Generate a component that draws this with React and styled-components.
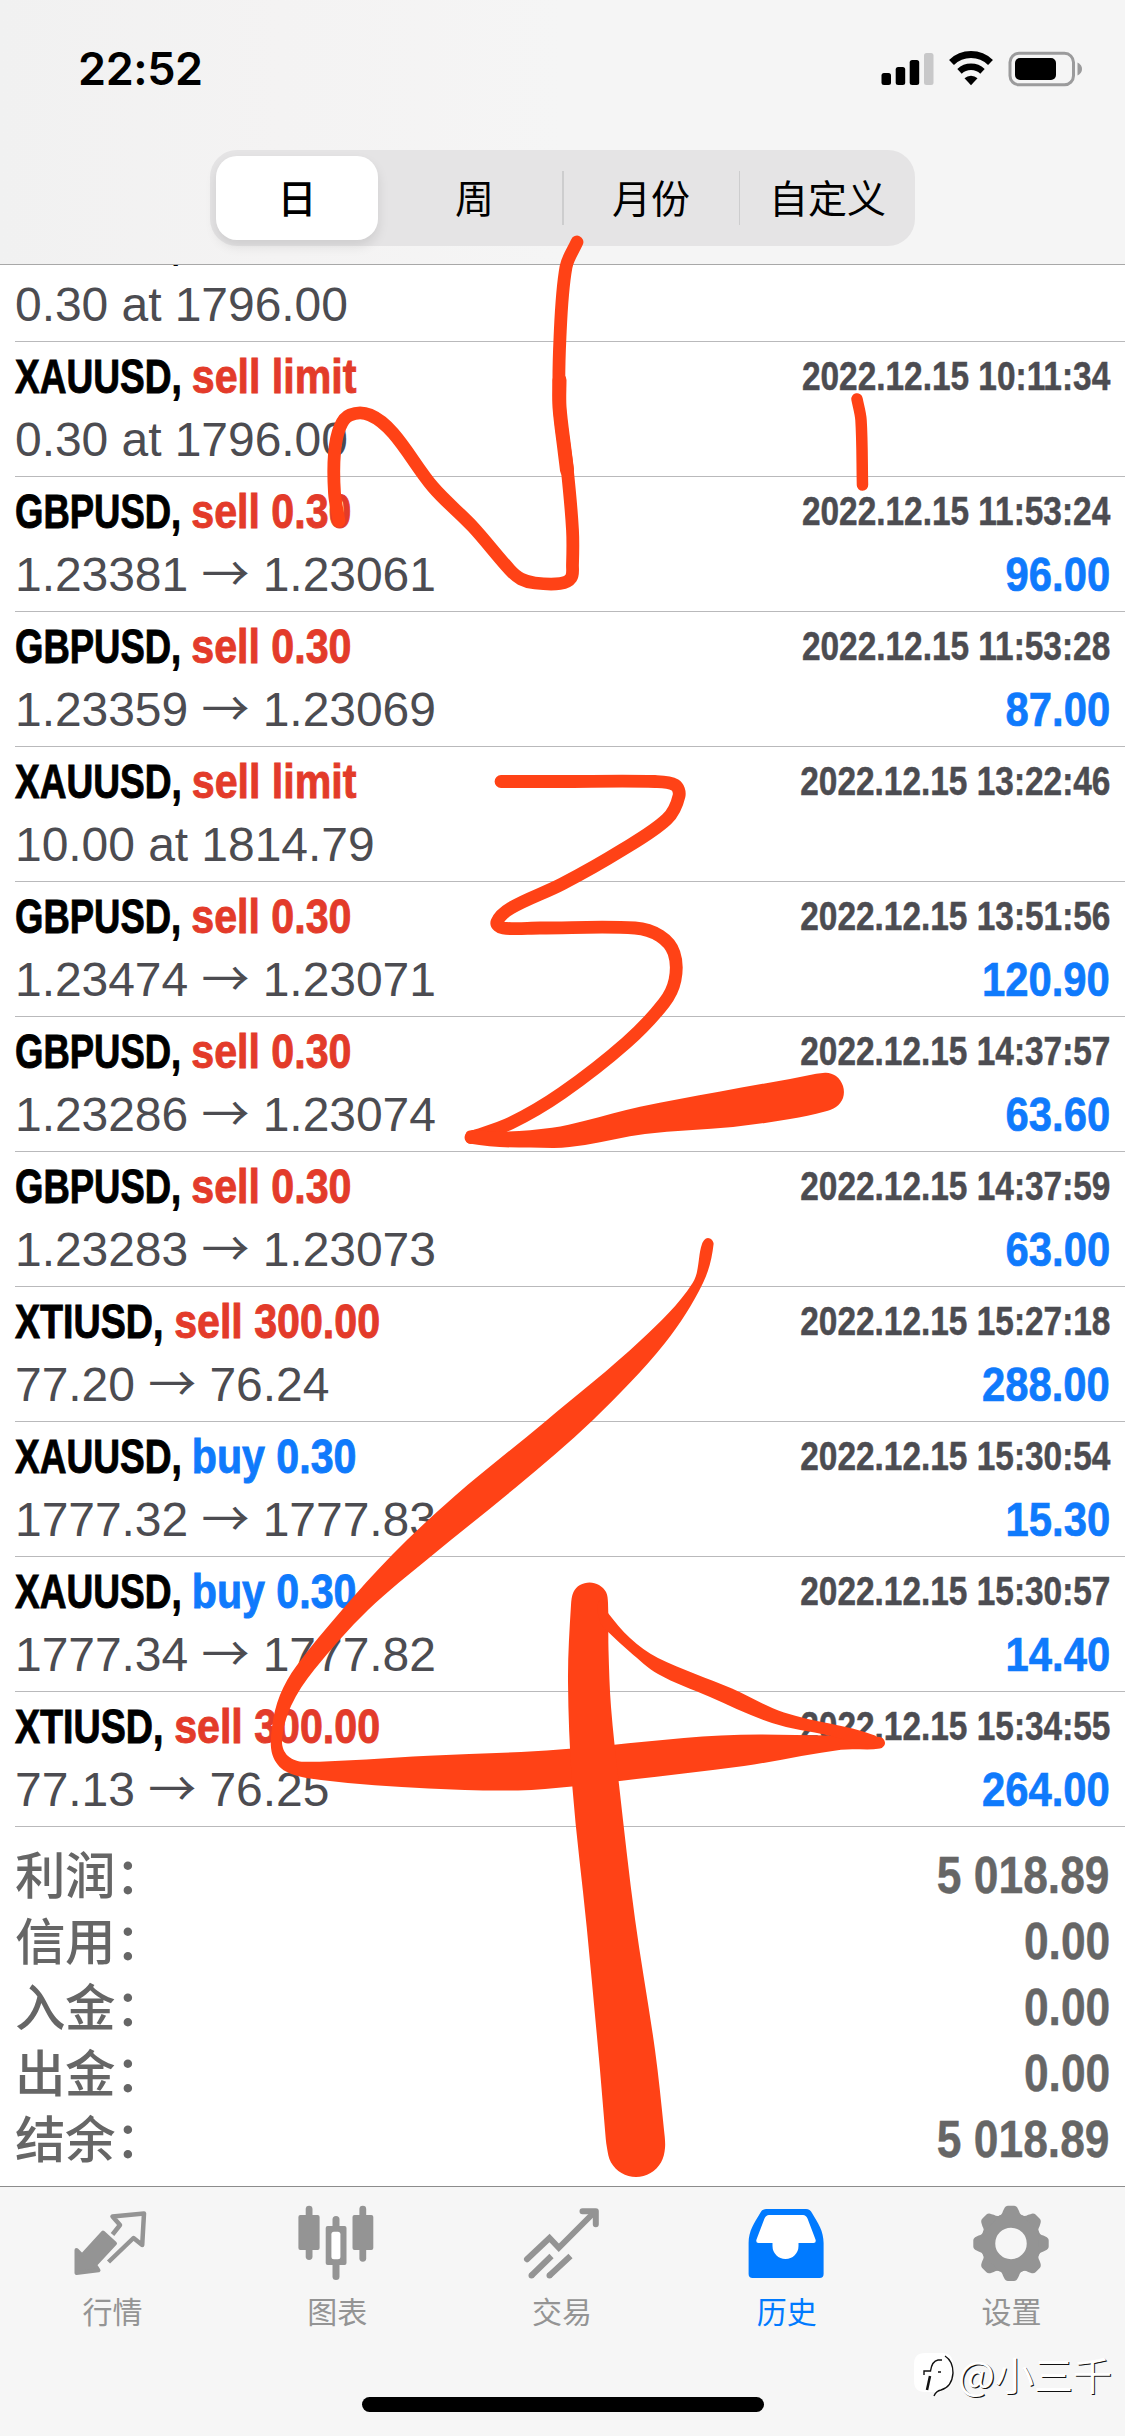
import React from 'react';
import styled, { createGlobalStyle } from 'styled-components';

const GlobalStyle = createGlobalStyle`
  * {
    box-sizing: border-box;
  }

  body {
    margin: 0;
    background: #fff;
    font-family: "Liberation Sans", "Noto Sans CJK SC", sans-serif;
  }
`;

const Screen = styled.div`
  position: relative;
  width: 1125px;
  height: 2436px;
  display: flex;
  flex-direction: column;
  background: #fff;
  overflow: hidden;
`;

const Header = styled.header`
  height: 265px;
  flex: none;
  background: linear-gradient(90deg, #f1f1f1 0%, #f4f3f3 25%, #f5f5f5 50%, #f5f5f5 100%);
  border-bottom: 1px solid #a8a8a8;
`;

const StatusBar = styled.div`
  height: 150px;
  padding: 42px 43px 0 78px;
  display: flex;
  justify-content: space-between;
  align-items: flex-start;
`;

const Clock = styled.div`
  font-family: Inter, sans-serif;
  font-size: 45px;
  font-weight: 600;
  line-height: 54px;
  letter-spacing: -0.4px;
  color: #000;
`;

const Segments = styled.div`
  width: 705px;
  height: 96px;
  margin: 0 auto;
  padding: 6px 0 6px 6px;
  display: flex;
  border-radius: 27px;
  background: #e5e4e5;
`;

const Segment = styled.button`
  flex: 0 0 ${(props) => (props.$active ? 162 : 175)}px;
  margin: ${(props) => (props.$active ? '0 9px 0 0' : '0')};
  padding: 0 0 4px;
  border: none;
  border-radius: 21px;
  background: ${(props) => (props.$active ? '#fff' : 'transparent')};
  box-shadow: ${(props) => (props.$active ? '0 6px 12px rgba(0, 0, 0, 0.1)' : 'none')};
  font-family: "Noto Sans CJK SC", sans-serif;
  font-size: 39px;
  font-weight: ${(props) => (props.$active ? 500 : 400)};
  color: #000;
`;

const Divider = styled.span`
  width: 2px;
  height: 54px;
  align-self: center;
  background: #cdcdce;
`;

const History = styled.main`
  flex: 1;
  min-height: 0;
  overflow: hidden;
`;

// the list is scrolled, so the first deal is half under the header
const DealList = styled.ul`
  list-style: none;
  margin: -58px 0 0;
  padding: 0 0 0 15px;
`;

const Deal = styled.li`
  height: 135px;
  padding: 0 15px 0 0;
  border-bottom: 1px solid #b9b9bb;
`;

const DealLine = styled.div`
  display: flex;
  justify-content: space-between;
  align-items: baseline;
  height: ${(props) => props.$height}px;
  line-height: 55px;
  padding-top: ${(props) => props.$top}px;
  white-space: nowrap;
`;

const Instrument = styled.span`
  font-size: 48px;
  font-weight: 700;
  color: #000;
  -webkit-text-stroke: 0.9px;
  transform: scaleX(${(props) => props.$squeeze});
  transform-origin: left;
`;

const Action = styled.span`
  display: inline-block;
  color: ${(props) => (props.$side === 'buy' ? '#0f7afc' : '#e33b2a')};
  transform: scaleX(${(props) => props.$stretch});
  transform-origin: left;
`;

const DealTime = styled.time`
  font-size: 40px;
  font-weight: 700;
  color: #4c4c51;
  -webkit-text-stroke: 0.5px;
  transform: translateY(-3px) scaleX(0.835);
  transform-origin: right;
`;

const Price = styled.span`
  font-size: 48px;
  letter-spacing: -0.05px;
  color: #4c4c51;
`;

const Arrow = styled.span`
  font-family: "Noto Sans CJK SC", sans-serif;
  font-weight: 400;
  line-height: 0;
`;

const Profit = styled.span`
  font-size: 48px;
  font-weight: 700;
  color: #0f7afc;
  -webkit-text-stroke: 0.7px;
  transform: scaleX(0.87);
  transform-origin: right;
`;

const Summary = styled.dl`
  margin: 0;
  padding: 14px 15px 0;
`;

const SummaryRow = styled.div`
  height: 66px;
  display: flex;
  justify-content: space-between;
  align-items: flex-start;
`;

const SummaryLabel = styled.dt`
  font-family: "Noto Sans CJK SC", sans-serif;
  font-size: 50.5px;
  font-weight: 500;
  line-height: 62px;
  letter-spacing: -0.4px;
  color: #666;
`;

const SummaryValue = styled.dd`
  margin: 0;
  font-size: 51px;
  font-weight: 700;
  line-height: 70px;
  color: #666;
  -webkit-text-stroke: 0.4px;
  transform: scaleX(0.87);
  transform-origin: right;
`;

const TabBar = styled.nav`
  height: 250px;
  flex: none;
  padding-right: 1px;
  display: flex;
  border-top: 1px solid #8c8c8c;
  background: #f6f6f6;
`;

const Tab = styled.a`
  flex: 1;
  padding-top: 13px;
  display: flex;
  flex-direction: column;
  align-items: center;
  color: ${(props) => (props.$active ? '#007aff' : '#949494')};
`;

const TabLabel = styled.span`
  font-family: "Noto Sans CJK SC", sans-serif;
  font-size: 30px;
  line-height: 40px;
`;

const HomeIndicator = styled.div`
  position: absolute;
  left: 362px;
  bottom: 24px;
  width: 402px;
  height: 15px;
  border-radius: 8px;
  background: #000;
`;

const Watermark = styled.div`
  position: absolute;
  left: 914px;
  bottom: 36px;
  display: flex;
  align-items: center;
  font-family: "Noto Sans CJK SC", sans-serif;
  font-size: 39px;
  line-height: 54px;
  white-space: nowrap;
  color: #fff;
  text-shadow: 1.2px 1.2px 0 #111;
`;

const Drawing = styled.svg`
  position: absolute;
  left: 0;
  top: 0;
  pointer-events: none;
`;

const deals = [
  { id: 1, symbol: 'XAUUSD', side: 'sell', label: 'sell limit', time: '2022.12.15 10:11:34', price: '0.30 at 1796.00' },
  { id: 2, symbol: 'XAUUSD', side: 'sell', label: 'sell limit', time: '2022.12.15 10:11:34', price: '0.30 at 1796.00' },
  { id: 3, symbol: 'GBPUSD', side: 'sell', label: 'sell 0.30', time: '2022.12.15 11:53:24', open: '1.23381', close: '1.23061', profit: '96.00' },
  { id: 4, symbol: 'GBPUSD', side: 'sell', label: 'sell 0.30', time: '2022.12.15 11:53:28', open: '1.23359', close: '1.23069', profit: '87.00' },
  { id: 5, symbol: 'XAUUSD', side: 'sell', label: 'sell limit', time: '2022.12.15 13:22:46', price: '10.00 at 1814.79' },
  { id: 6, symbol: 'GBPUSD', side: 'sell', label: 'sell 0.30', time: '2022.12.15 13:51:56', open: '1.23474', close: '1.23071', profit: '120.90' },
  { id: 7, symbol: 'GBPUSD', side: 'sell', label: 'sell 0.30', time: '2022.12.15 14:37:57', open: '1.23286', close: '1.23074', profit: '63.60' },
  { id: 8, symbol: 'GBPUSD', side: 'sell', label: 'sell 0.30', time: '2022.12.15 14:37:59', open: '1.23283', close: '1.23073', profit: '63.00' },
  { id: 9, symbol: 'XTIUSD', side: 'sell', label: 'sell 300.00', time: '2022.12.15 15:27:18', open: '77.20', close: '76.24', profit: '288.00' },
  { id: 10, symbol: 'XAUUSD', side: 'buy', label: 'buy 0.30', time: '2022.12.15 15:30:54', open: '1777.32', close: '1777.83', profit: '15.30' },
  { id: 11, symbol: 'XAUUSD', side: 'buy', label: 'buy 0.30', time: '2022.12.15 15:30:57', open: '1777.34', close: '1777.82', profit: '14.40' },
  { id: 12, symbol: 'XTIUSD', side: 'sell', label: 'sell 300.00', time: '2022.12.15 15:34:55', open: '77.13', close: '76.25', profit: '264.00' },
];

// how narrow each symbol is set
const squeeze = { XAUUSD: 0.772, GBPUSD: 0.76, XTIUSD: 0.784 };

const summary = [
  ['利润：', '5 018.89'],
  ['信用：', '0.00'],
  ['入金：', '0.00'],
  ['出金：', '0.00'],
  ['结余：', '5 018.89'],
];

const StatusIcons = () => (
  <svg width="204" height="54" viewBox="878 42 204 54">
    <rect x="881.5" y="73" width="9.5" height="12" rx="2.5" />
    <rect x="895.7" y="67" width="9.5" height="18" rx="2.5" />
    <rect x="909.7" y="60" width="9.5" height="25" rx="2.5" />
    <rect x="924" y="53" width="9.5" height="32" rx="2.5" fill="#c8c8c9" />
    <g fill="none" stroke="#000">
      <path d="M951.5 62.5a28 28 0 0 1 39 0" strokeWidth="7" />
      <path d="M959.5 71.3a17 17 0 0 1 23 0" strokeWidth="6.5" />
    </g>
    <path d="M964.5 78.3a9.5 9.5 0 0 1 13 0l-6.5 7z" />
    <rect x="1010" y="53.3" width="63.5" height="31.5" rx="9" fill="none" stroke="#9b9b9c" strokeWidth="3" />
    <rect x="1015" y="58" width="41" height="22" rx="5" />
    <path d="M1077.5 62.5c6 2.5 6 10.5 0 13z" fill="#9b9b9c" />
  </svg>
);

const QuotesIcon = () => (
  <svg width="90" height="90" viewBox="0 0 90 90" fill="none" stroke="currentColor" strokeWidth="4.5" strokeLinejoin="round">
    <path d="M45.5 34.5l7.5-9.5-7.5-8.5 31.5-3-1.8 31.5-8.7-7L41.5 62" />
    <path d="M9.5 50l5.5 5.5L36 32.5 48 43.5 28 64.8l3.5 5.5L9.5 73z" fill="currentColor" strokeWidth="4" />
  </svg>
);

const ChartIcon = () => (
  <svg width="90" height="90" viewBox="0 0 90 90" fill="currentColor">
    <rect x="6.4" y="15" width="21.2" height="35" rx="2" />
    <rect x="13.7" y="5.7" width="6.8" height="54.3" rx="3.4" />
    <rect x="40.5" y="16" width="7" height="64" rx="3.5" />
    <rect x="33.7" y="26" width="20.8" height="39" rx="2" />
    <rect x="39.4" y="31.7" width="9" height="27.6" rx="2.5" fill="#fff" />
    <rect x="60.5" y="15" width="20.8" height="35" rx="2" />
    <rect x="67.4" y="5.7" width="6.8" height="56" rx="3.4" />
  </svg>
);

const TradeIcon = () => (
  <svg width="90" height="90" viewBox="0 0 90 90" fill="none" stroke="currentColor" strokeWidth="6">
    <path d="M10 59.3L32.5 38l9.3 9.8L77 12.5" strokeLinecap="round" />
    <path d="M65.5 11.2h13.3v13" strokeLinecap="round" strokeLinejoin="round" />
    <path d="M14.5 75.5L34.5 56M32.5 75.5L53.5 56" />
    <circle cx="14.5" cy="75.5" r="3" fill="currentColor" stroke="none" />
    <circle cx="32.5" cy="75.5" r="3" fill="currentColor" stroke="none" />
  </svg>
);

const HistoryIcon = () => (
  <svg width="90" height="90" viewBox="0 0 90 90">
    <path
      d="M24 9h40q4 0 6 4c6 10 11.6 18 11.6 30v31q0 4-4 4h-67q-4 0-4-4V43c0-12 5.6-20 11.6-30q2-4 5.8-4z"
      fill="currentColor"
    />
    <path
      d="M27 15h34q3 0 4.5 3.5l8 21q1 3.5-2 3.5H56.5v3a13 13 0 0 1-26 0v-3H16.5q-3 0-2-3.5l8-21Q24 15 27 15z"
      fill="#fff"
    />
  </svg>
);

const SettingsIcon = () => (
  <svg width="90" height="90" viewBox="0 0 90 90" fill="currentColor">
    <circle cx="44" cy="43.4" r="23" fill="none" stroke="currentColor" strokeWidth="14.5" />
    {[0, 45, 90, 135, 180, 225, 270, 315].map((angle) => (
      <path
        key={angle}
        transform={`rotate(${angle} 44 43.4)`}
        d="M32 16q3-1 4-5l1-2q1.5-3.3 4-3.3h6q2.5 0 4 3.3l1 2q1 4 4 5z"
      />
    ))}
  </svg>
);

const tabs = [
  { label: '行情', Icon: QuotesIcon },
  { label: '图表', Icon: ChartIcon },
  { label: '交易', Icon: TradeIcon },
  { label: '历史', Icon: HistoryIcon, active: true },
  { label: '设置', Icon: SettingsIcon },
];

// smooth curve through every point
const curve = (points, closed) => {
  const n = points.length;
  const at = (i) => (closed ? points[(i + n) % n] : points[Math.max(0, Math.min(n - 1, i))]);
  let d = `M${points[0].join(' ')}`;
  for (let i = 0; i < (closed ? n : n - 1); i++) {
    const [p0, p1, p2, p3] = [at(i - 1), at(i), at(i + 1), at(i + 2)];
    // handles never reach past a third of their own segment
    const len = Math.hypot(p2[0] - p1[0], p2[1] - p1[1]) / 3;
    const a = Math.hypot(p2[0] - p0[0], p2[1] - p0[1]) || 1;
    const b = Math.hypot(p3[0] - p1[0], p3[1] - p1[1]) || 1;
    d += `C${p1[0] + ((p2[0] - p0[0]) / a) * len} ${p1[1] + ((p2[1] - p0[1]) / a) * len} `;
    d += `${p2[0] - ((p3[0] - p1[0]) / b) * len} ${p2[1] - ((p3[1] - p1[1]) / b) * len} ${p2[0]} ${p2[1]}`;
  }
  return d;
};

const lines = [
  { width: 12.8, points: [[339, 521], [334.5, 493], [334.5, 453], [340, 427], [350, 415], [370, 415], [393, 433], [433, 487], [473, 527], [510, 570], [521, 579], [535, 583], [560, 583.5], [571, 578], [572.5, 565], [572.5, 530], [567, 467], [559.5, 407], [560, 337], [566, 267], [577, 242]] },
  { width: 14, points: [[567, 470], [564.5, 450], [559.5, 407], [559.5, 380]] },
  { width: 11.5, points: [[857, 399], [861, 420], [862.5, 485]] },
  { width: 12.8, points: [[501, 781.5], [560, 781.5], [655, 781.5], [675, 785], [679, 796], [667, 819], [622, 850], [562, 884], [511, 908], [497, 922], [503, 928], [540, 928], [635, 928], [660, 936], [674, 953], [675, 980], [664, 1003], [626, 1043], [562, 1093], [511, 1123], [471, 1137.5]] },
];

const shapes = [
  [[466, 1133], [475, 1130], [498, 1132], [552, 1127.7], [585, 1120.7], [640, 1106.7], [719, 1091.7], [790, 1079], [825, 1072.7], [836, 1076], [843, 1086], [843, 1098], [836, 1107], [825, 1111.5], [790, 1119], [733, 1127], [645, 1134], [585, 1145], [552.6, 1148], [469, 1143.5]],
  [[708, 1238], [713.6, 1244], [703, 1283], [665, 1343], [593, 1420], [516.6, 1486.7], [430.5, 1556.7], [368, 1610], [314, 1670], [291, 1706], [282, 1741], [288, 1756], [304, 1761.8], [428.6, 1755.7], [521, 1752], [572.5, 1748.6], [721, 1735.5], [829, 1735.5], [880, 1737], [885, 1743], [880, 1748.6], [841, 1749.8], [744, 1766], [624, 1780.4], [572, 1786.5], [518, 1790.5], [428.6, 1788.6], [321, 1780], [286, 1771.5], [272.5, 1755], [272, 1727], [280, 1695], [296.4, 1666], [342, 1610], [392, 1555], [454, 1496.7], [545, 1421.7], [641, 1340], [692.6, 1283], [702, 1244]],
  [[589.6, 1582.4], [599, 1585], [606, 1592], [608, 1603], [608.5, 1650], [611, 1707], [619, 1784.5], [635, 1919], [655, 2050], [664, 2130], [665, 2148], [661, 2162.5], [650.5, 2173], [636, 2177], [621.5, 2173], [611, 2162.5], [607, 2148], [605, 2130], [600, 2070], [586.7, 1927], [572.5, 1788.6], [568, 1682], [571, 1605], [573.5, 1592], [580, 1585]],
  [[600, 1600], [608, 1613], [630, 1638], [658, 1658], [732, 1688.6], [784, 1712.5], [875, 1735.5], [870, 1745], [829, 1735.5], [772, 1723], [709.5, 1696.7], [658, 1674], [630, 1652], [609, 1632.7], [600, 1622]],
];

const App = () => {
  return (
    <Screen>
      <GlobalStyle />
      <Header>
        <StatusBar>
          <Clock>22:52</Clock>
          <StatusIcons />
        </StatusBar>
        <Segments>
          <Segment $active>日</Segment>
          <Segment>周</Segment>
          <Divider />
          <Segment>月份</Segment>
          <Divider />
          <Segment>自定义</Segment>
        </Segments>
      </Header>

      <History>
        <DealList>
          {deals.map((deal) => (
            <Deal key={deal.id}>
              <DealLine $height={63} $top={7}>
                <Instrument $squeeze={squeeze[deal.symbol]}>
                  {deal.symbol},{' '}
                  <Action $side={deal.side} $stretch={0.857 / squeeze[deal.symbol]}>{deal.label}</Action>
                </Instrument>
                <DealTime>{deal.time}</DealTime>
              </DealLine>
              <DealLine $height={66} $top={7}>
                <Price>{deal.price || <>{deal.open} <Arrow>→</Arrow> {deal.close}</>}</Price>
                {deal.profit && <Profit>{deal.profit}</Profit>}
              </DealLine>
            </Deal>
          ))}
        </DealList>
        <Summary>
          {summary.map(([label, value]) => (
            <SummaryRow key={label}>
              <SummaryLabel>{label}</SummaryLabel>
              <SummaryValue>{value}</SummaryValue>
            </SummaryRow>
          ))}
        </Summary>
      </History>

      <TabBar>
        {tabs.map(({ label, Icon, active }) => (
          <Tab key={label} $active={active}>
            <Icon />
            <TabLabel>{label}</TabLabel>
          </Tab>
        ))}
      </TabBar>
      <HomeIndicator />

      <Watermark>
        <svg width="44" height="54" viewBox="0 0 44 54">
          <path d="M11 7h17q11 0 11 11v13q0 12-12 14l-7 6 1-5H11Q0 46 0 35V18Q0 7 11 7z" fill="#fff" />
          <path d="M31 10q8 5 8 17-1 14-12 17-5 1-7 6M28 14h-4q-6 1-7.5 11h-6.5v4M24 26h3" fill="none" stroke="#111" strokeWidth="1.4" />
          <path d="M16 30l-3 14" stroke="#111" strokeWidth="2.5" />
        </svg>
        @小三千
      </Watermark>

      <Drawing width="1125" height="2436" viewBox="0 0 1125 2436">
        {lines.map(({ width, points }, i) => (
          <path key={i} d={curve(points)} fill="none" stroke="#ff4216" strokeWidth={width} strokeLinecap="round" strokeLinejoin="round" />
        ))}
        {shapes.map((points, i) => (
          <path key={i} d={curve(points, true)} fill="#ff4216" />
        ))}
      </Drawing>
    </Screen>
  );
};

export default App;
